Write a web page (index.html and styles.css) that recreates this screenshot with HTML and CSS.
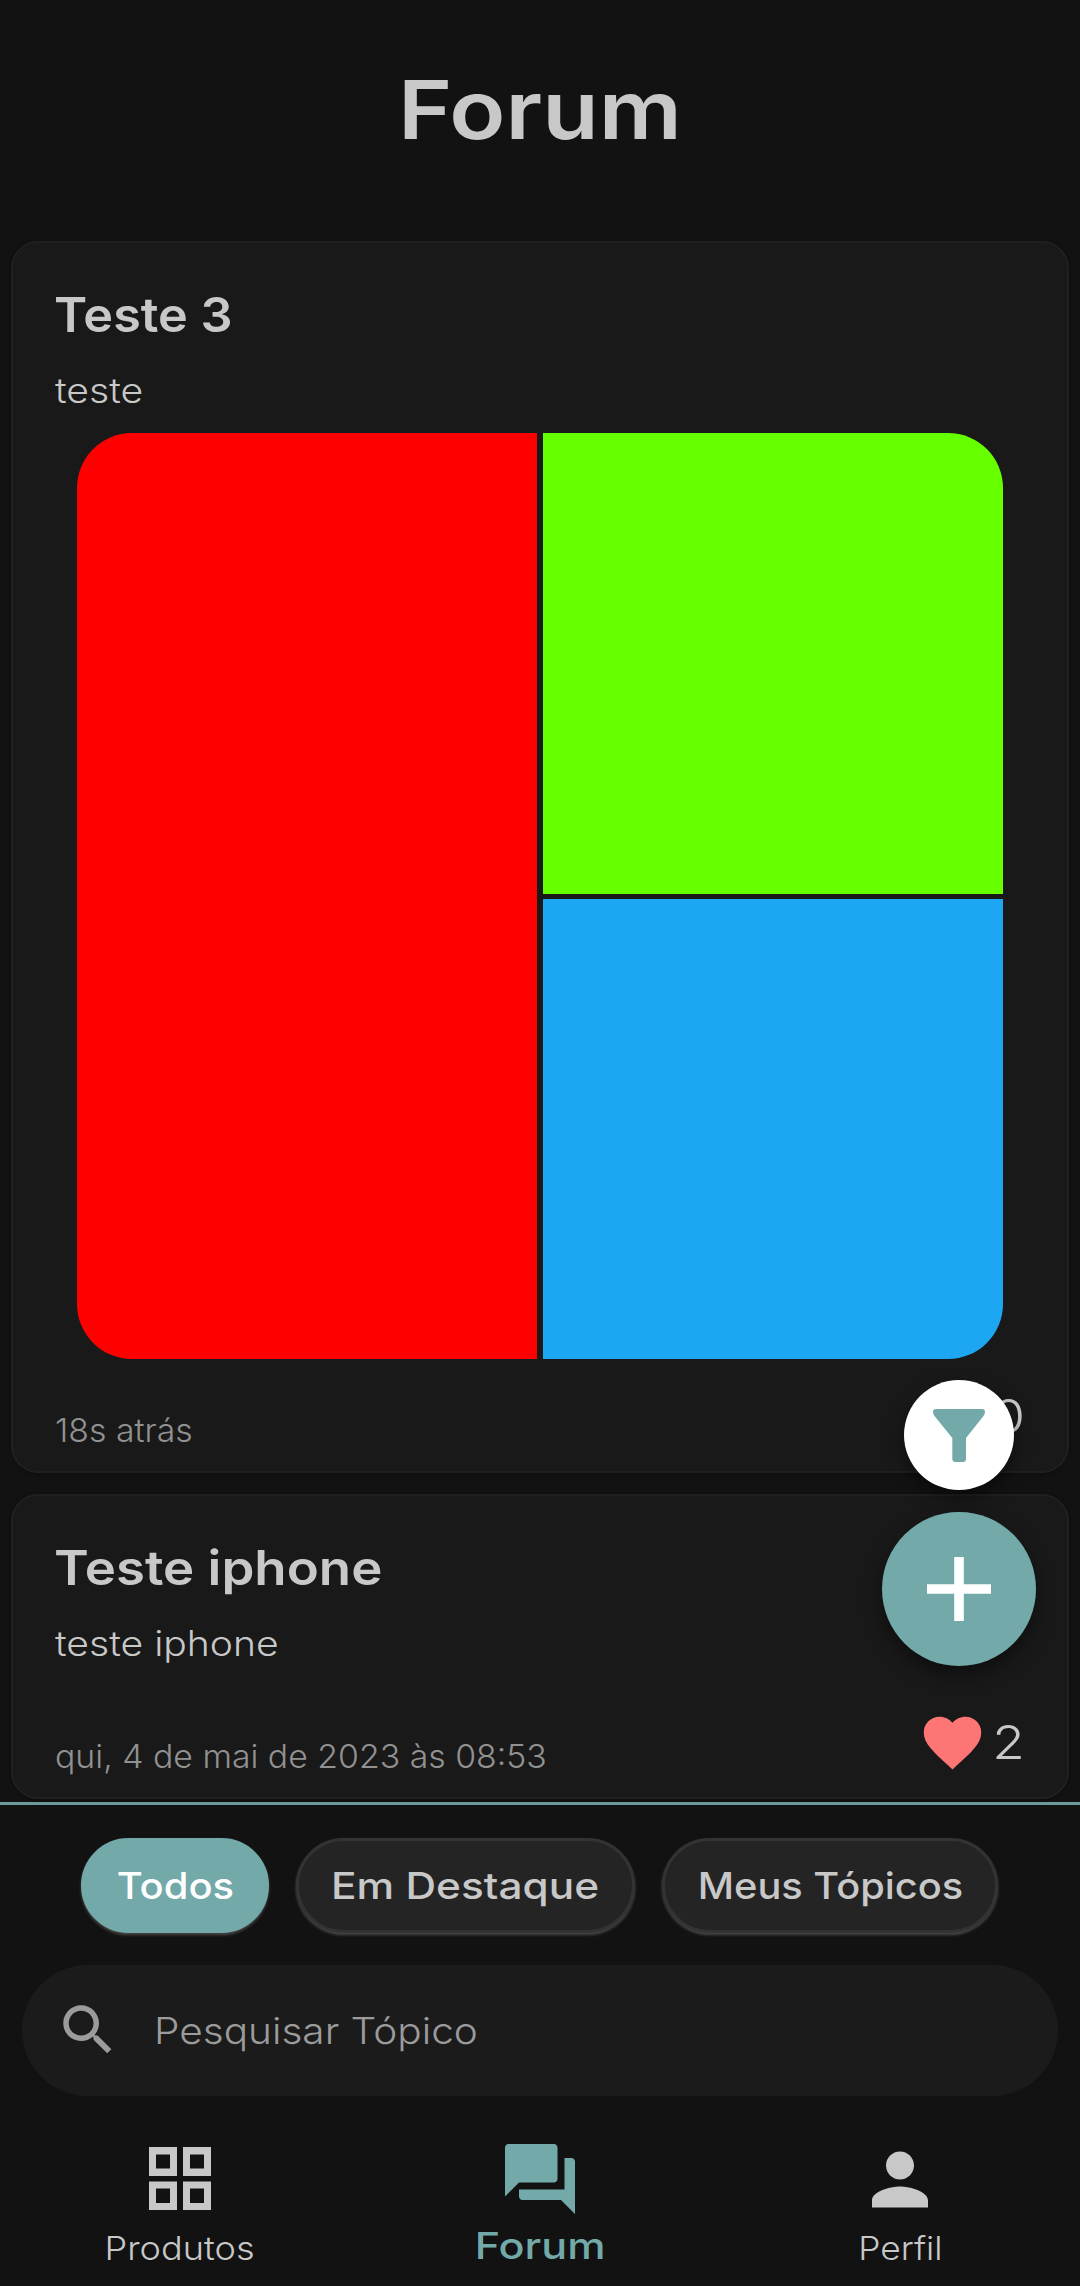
FILE: index.html
```
<!DOCTYPE html>
<html lang="pt-BR">
<head>
<meta charset="utf-8">
<title>Forum</title>
<link rel="stylesheet" href="styles.css">
</head>
<body>
<div class="app">
  <header class="header"><h1 class="header-title">Forum</h1></header>

  <main class="feed">
    <article class="card card-gallery">
      <h2 class="card-title">Teste 3</h2>
      <p class="card-body">teste</p>
      <div class="gallery">
        <div class="tile tile-red"></div>
        <div class="tile tile-green"></div>
        <div class="tile tile-blue"></div>
      </div>
      <footer class="card-footer">
        <span class="card-date">18s atrás</span>
        <span class="likes"><span class="likes-count">0</span></span>
      </footer>
    </article>

    <article class="card card-text">
      <h2 class="card-title">Teste iphone</h2>
      <p class="card-body">teste iphone</p>
      <footer class="card-footer">
        <span class="card-date">qui, 4 de mai de 2023 às 08:53</span>
        <span class="likes">
          <svg class="heart" viewBox="0 0 24 24"><path d="M12 21.350l-1.450-1.320C5.400 15.360 2 12.280 2 8.500 2 5.420 4.420 3 7.500 3c1.740 0 3.410.81 4.500 2.090C13.090 3.810 14.760 3 16.500 3 19.580 3 22 5.420 22 8.500c0 3.780-3.400 6.860-8.550 11.540L12 21.350z"/></svg>
          <span class="likes-count">2</span>
        </span>
      </footer>
    </article>

    <div class="actions">
      <button class="fab fab-filter" aria-label="Filtrar">
        <svg class="funnel" viewBox="0 0 52 53"><path d="M3 0H49Q52 0 52 3Q52 5 50.500 7L33 29V50Q33 53 30 53H22.500Q19.300 53 19.300 50V29L1.500 7Q0 5 0 3Q0 0 3 0Z"/></svg>
      </button>
      <button class="fab fab-add" aria-label="Adicionar">
        <svg class="plus" viewBox="0 0 64 64"><path d="M27.200 0h9.600v27.200H64v9.600H36.800V64h-9.600V36.800H0v-9.600h27.200z"/></svg>
      </button>
    </div>
  </main>

  <section class="panel">
    <div class="chips">
      <button class="chip chip-all"><span class="label">Todos</span></button>
      <button class="chip chip-featured"><span class="label">Em Destaque</span></button>
      <button class="chip chip-mine"><span class="label">Meus Tópicos</span></button>
    </div>
    <div class="search">
      <svg class="search-icon" viewBox="0 0 24 24"><path d="M15.500 14h-.79l-.28-.27C15.410 12.590 16 11.110 16 9.500 16 5.910 13.090 3 9.500 3S3 5.910 3 9.500 5.910 16 9.500 16c1.610 0 3.090-.59 4.230-1.570l.27.28v.79l5 4.990L20.490 19l-4.990-5zm-6 0C7.010 14 5 11.990 5 9.500S7.010 5 9.500 5 14 7.010 14 9.500 11.990 14 9.500 14z"/></svg>
      <span class="search-text">Pesquisar Tópico</span>
    </div>
    <nav class="nav">
      <a class="nav-item nav-products">
        <svg class="nav-icon" viewBox="0 0 62 63"><path fill-rule="evenodd" d="M0 0h28v29H0zM7 7.500v14h14v-14zM34 0h28v29H34zM41 7.500v14h14v-14zM0 34.500h28v28.500H0zM7 41.500v14.500h14V41.500zM34 34.500h28v28.500H34zM41 41.500v14.500h14V41.500z"/></svg>
        <span class="label">Produtos</span>
      </a>
      <a class="nav-item nav-forum">
        <svg class="nav-icon" viewBox="2 2 20 20"><path d="M21 6h-2v9H6v2c0 .55.45 1 1 1h11l4 4V7c0-.55-.45-1-1-1zm-4 6V3c0-.55-.45-1-1-1H3c-.55 0-1 .45-1 1v14l4-4h10c.55 0 1-.45 1-1z"/></svg>
        <span class="label">Forum</span>
      </a>
      <a class="nav-item nav-profile">
        <svg class="nav-icon" viewBox="4 4 16 16"><path d="M12 12c2.210 0 4-1.790 4-4s-1.790-4-4-4-4 1.790-4 4 1.790 4 4 4zm0 2c-2.670 0-8 1.340-8 4v2h16v-2c0-2.660-5.330-4-8-4z"/></svg>
        <span class="label">Perfil</span>
      </a>
    </nav>
  </section>
</div>
</body>
</html>
```
FILE: styles.css
```
* { box-sizing: border-box; }
body {
  margin: 0;
  background: #121212;
  color: #c8c8c8;
  font-family: Inter, "Open Sans", sans-serif;
}
h1, h2, p { margin: 0; }
button { padding: 0; font-family: inherit; color: inherit; border: 0; }

.app {
  width: 1080px;
  height: 2286px;
  display: flex;
  flex-direction: column;
  overflow: hidden;
}

.header { height: 241px; padding-top: 60px; text-align: center; }
.header-title { font-size: 81px; font-weight: 560; line-height: 100px; transform: scaleX(1.14); }

.feed {
  position: relative;
  height: 1561px;
  padding: 0 11px;
  display: flex;
  flex-direction: column;
  gap: 21px;
}
.card {
  border: 2px solid #202020;
  border-radius: 27px;
  background: #191919;
  padding: 42px 42px 0;
  display: flex;
  flex-direction: column;
  box-shadow: 0 1px 3px #0e0e0e;
}
.card-gallery { height: 1232px; }
.card-text { height: 305px; }
.card-title {
  margin-left: -1px;
  font-size: 48px;
  font-weight: 580;
  line-height: 60px;
  transform-origin: left;
}
.card-gallery .card-title { transform: scaleX(1.05); }
.card-text .card-title { transform: scaleX(1.1); }
.card-body {
  margin-top: 22px;
  font-size: 35px;
  font-weight: 350;
  line-height: 46px;
  transform: scaleX(1.117);
  transform-origin: left;
}

.gallery {
  margin: 20px 22px 0;
  width: 926px;
  height: 926px;
  flex: none;
  display: grid;
  grid-template: 1fr 1fr / 1fr 1fr;
  gap: 5px 6px;
  border-radius: 55px;
  overflow: hidden;
}
.tile-red { background: #fe0000; grid-row: span 2; }
.tile-green { background: #66ff00; }
.tile-blue { background: #1da7f2; }

.card-footer {
  flex: 1;
  display: flex;
  justify-content: space-between;
  align-items: flex-end;
}
.card-date {
  color: #919191;
  font-size: 32.500px;
  font-weight: 350;
  line-height: 40px;
  padding-bottom: 20px;
  transform: scaleX(1.04);
  transform-origin: left;
}
.likes { display: flex; align-items: center; padding-bottom: 20px; height: 90px; }
.likes-count {
  margin-right: 0;
  font-size: 47px;
  font-weight: 300;
  line-height: 60px;
  transform: scaleX(1.13);
  transform-origin: right;
}
.heart { width: 69px; height: 69px; fill: #fe7575; margin-right: 9px; }

.actions {
  position: absolute;
  right: 44px;
  top: 1139px;
  display: flex;
  flex-direction: column;
  align-items: center;
  gap: 22px;
}
.fab {
  border-radius: 50%;
  display: flex;
  align-items: center;
  justify-content: center;
  box-shadow: 0 8px 18px rgba(0, 0, 0, .45);
}
.fab-filter { width: 110px; height: 110px; background: #fff; }
.fab-add { width: 154px; height: 154px; background: #73a9a9; }
.funnel { width: 52px; height: 53px; fill: #73a9a9; }
.plus { width: 64px; height: 64px; fill: #fff; }

.panel { flex: 1; border-top: 3px solid #6f9a9b; background: #121212; }
.chips { display: flex; gap: 27px; padding: 33px 0 0 81px; }
.label { display: inline-block; }
.chip {
  height: 95px;
  border-radius: 48px;
  border: 3px solid #333;
  background: #242424;
  font-size: 37px;
  font-weight: 450;
  line-height: 90px;
  color: #c8c8c8;
  box-shadow: 0 2px 3px #484848;
}
.chip-all { width: 188px; background: #73a9a9; border-color: #73a9a9; color: #fff; }
.chip-featured { width: 339px; }
.chip-mine { width: 336px; }
.chip-all .label { transform: scaleX(1.08); }
.chip-featured .label { transform: scaleX(1.145); }
.chip-mine .label { transform: scaleX(1.075); }

.search {
  margin: 32px 22px 0;
  height: 131px;
  border-radius: 66px;
  background: #1b1b1b;
  display: flex;
  align-items: center;
  padding-left: 33px;
  color: #9b9b9b;
}
.search-icon { width: 66px; height: 66px; fill: #9b9b9b; margin-top: -1px; }
.search-text {
  margin-left: 33px;
  font-size: 37px;
  font-weight: 350;
  transform: scaleX(1.096);
  transform-origin: left;
}

.nav { display: flex; height: 190px; }
.nav-item {
  flex: 1;
  display: flex;
  flex-direction: column;
  align-items: center;
  justify-content: flex-end;
  font-size: 33px;
  font-weight: 350;
  line-height: 40px;
  padding-bottom: 18px;
}
.nav-icon { fill: #c8c8c8; }
.nav-products .nav-icon { width: 62px; height: 63px; margin-bottom: 18px; }
.nav-products .label { transform: scaleX(1.095); }
.nav-forum { color: #73a9a9; font-size: 37px; font-weight: 450; padding-bottom: 20px; }
.nav-forum .nav-icon { width: 70px; height: 70px; fill: #73a9a9; margin-bottom: 12px; }
.nav-forum .label { transform: scaleX(1.165); }
.nav-profile .nav-icon { width: 56px; height: 57px; margin-bottom: 20px; }
.nav-profile .label { transform: scaleX(1.07); }
```
